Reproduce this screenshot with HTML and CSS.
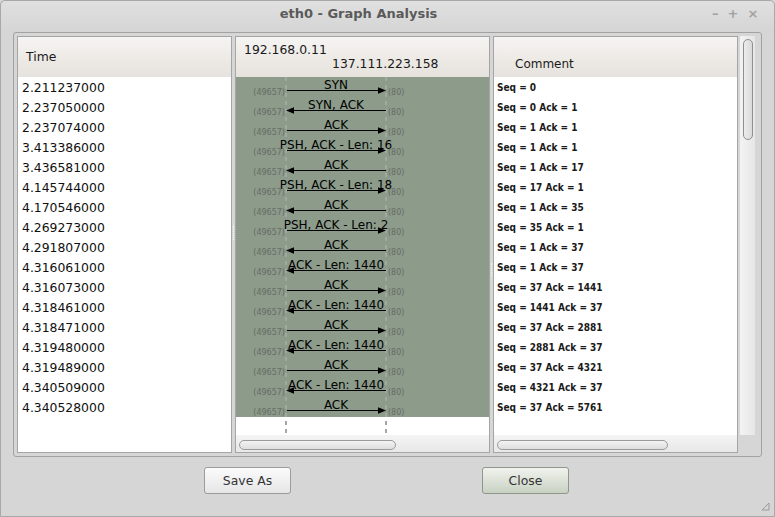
FILE: index.html
```html
<!DOCTYPE html>
<html>
<head>
<meta charset="utf-8">
<link rel="stylesheet" href="styles.css">
</head>
<body>
<div class="window">
  <div class="titlebar">
    <div class="title">eth0 - Graph Analysis</div>
    <div class="controls"><span>–</span><span>+</span><span>×</span></div>
  </div>
  <div class="frame">
    <div class="panel panel-time">
      <div class="hdr hdr-time">Time</div>
      <div class="rows time-rows">
        <div class="row">2.211237000</div>
        <div class="row">2.237050000</div>
        <div class="row">2.237074000</div>
        <div class="row">3.413386000</div>
        <div class="row">3.436581000</div>
        <div class="row">4.145744000</div>
        <div class="row">4.170546000</div>
        <div class="row">4.269273000</div>
        <div class="row">4.291807000</div>
        <div class="row">4.316061000</div>
        <div class="row">4.316073000</div>
        <div class="row">4.318461000</div>
        <div class="row">4.318471000</div>
        <div class="row">4.319480000</div>
        <div class="row">4.319489000</div>
        <div class="row">4.340509000</div>
        <div class="row">4.340528000</div>
      </div>
    </div>
    <div class="pane-gap"><span class="grip"></span></div>
    <div class="panel panel-graph">
      <div class="hdr hdr-graph">
        <div class="host1">192.168.0.11</div>
        <div class="host2">137.111.223.158</div>
      </div>
      <svg class="graph" width="253" height="358" viewBox="0 0 253 358">
        <rect x="0" y="0" width="253" height="340" fill="#8c9b8a"/>
        <line x1="50" y1="0" x2="50" y2="358" class="dash"/>
        <line x1="150" y1="0" x2="150" y2="358" class="dash"/>
        <g class="flow" transform="translate(0,0)">
          <text x="100" y="11.5" class="lbl">SYN</text>
          <line x1="51" y1="13.5" x2="146" y2="13.5"/><polygon points="142,10.3 150,13.5 142,16.7"/>
          <text x="49" y="18" class="port pl">(49657)</text><text x="152" y="18" class="port">(80)</text>
        </g>
        <g class="flow" transform="translate(0,20)">
          <text x="100" y="11.5" class="lbl">SYN, ACK</text>
          <line x1="54" y1="13.5" x2="150" y2="13.5"/><polygon points="58,10.3 50,13.5 58,16.7"/>
          <text x="49" y="18" class="port pl">(49657)</text><text x="152" y="18" class="port">(80)</text>
        </g>
        <g class="flow" transform="translate(0,40)">
          <text x="100" y="11.5" class="lbl">ACK</text>
          <line x1="51" y1="13.5" x2="146" y2="13.5"/><polygon points="142,10.3 150,13.5 142,16.7"/>
          <text x="49" y="18" class="port pl">(49657)</text><text x="152" y="18" class="port">(80)</text>
        </g>
        <g class="flow" transform="translate(0,60)">
          <text x="100" y="11.5" class="lbl">PSH, ACK - Len: 16</text>
          <line x1="51" y1="13.5" x2="146" y2="13.5"/><polygon points="142,10.3 150,13.5 142,16.7"/>
          <text x="49" y="18" class="port pl">(49657)</text><text x="152" y="18" class="port">(80)</text>
        </g>
        <g class="flow" transform="translate(0,80)">
          <text x="100" y="11.5" class="lbl">ACK</text>
          <line x1="54" y1="13.5" x2="150" y2="13.5"/><polygon points="58,10.3 50,13.5 58,16.7"/>
          <text x="49" y="18" class="port pl">(49657)</text><text x="152" y="18" class="port">(80)</text>
        </g>
        <g class="flow" transform="translate(0,100)">
          <text x="100" y="11.5" class="lbl">PSH, ACK - Len: 18</text>
          <line x1="51" y1="13.5" x2="146" y2="13.5"/><polygon points="142,10.3 150,13.5 142,16.7"/>
          <text x="49" y="18" class="port pl">(49657)</text><text x="152" y="18" class="port">(80)</text>
        </g>
        <g class="flow" transform="translate(0,120)">
          <text x="100" y="11.5" class="lbl">ACK</text>
          <line x1="54" y1="13.5" x2="150" y2="13.5"/><polygon points="58,10.3 50,13.5 58,16.7"/>
          <text x="49" y="18" class="port pl">(49657)</text><text x="152" y="18" class="port">(80)</text>
        </g>
        <g class="flow" transform="translate(0,140)">
          <text x="100" y="11.5" class="lbl">PSH, ACK - Len: 2</text>
          <line x1="51" y1="13.5" x2="146" y2="13.5"/><polygon points="142,10.3 150,13.5 142,16.7"/>
          <text x="49" y="18" class="port pl">(49657)</text><text x="152" y="18" class="port">(80)</text>
        </g>
        <g class="flow" transform="translate(0,160)">
          <text x="100" y="11.5" class="lbl">ACK</text>
          <line x1="54" y1="13.5" x2="150" y2="13.5"/><polygon points="58,10.3 50,13.5 58,16.7"/>
          <text x="49" y="18" class="port pl">(49657)</text><text x="152" y="18" class="port">(80)</text>
        </g>
        <g class="flow" transform="translate(0,180)">
          <text x="100" y="11.5" class="lbl">ACK - Len: 1440</text>
          <line x1="54" y1="13.5" x2="150" y2="13.5"/><polygon points="58,10.3 50,13.5 58,16.7"/>
          <text x="49" y="18" class="port pl">(49657)</text><text x="152" y="18" class="port">(80)</text>
        </g>
        <g class="flow" transform="translate(0,200)">
          <text x="100" y="11.5" class="lbl">ACK</text>
          <line x1="51" y1="13.5" x2="146" y2="13.5"/><polygon points="142,10.3 150,13.5 142,16.7"/>
          <text x="49" y="18" class="port pl">(49657)</text><text x="152" y="18" class="port">(80)</text>
        </g>
        <g class="flow" transform="translate(0,220)">
          <text x="100" y="11.5" class="lbl">ACK - Len: 1440</text>
          <line x1="54" y1="13.5" x2="150" y2="13.5"/><polygon points="58,10.3 50,13.5 58,16.7"/>
          <text x="49" y="18" class="port pl">(49657)</text><text x="152" y="18" class="port">(80)</text>
        </g>
        <g class="flow" transform="translate(0,240)">
          <text x="100" y="11.5" class="lbl">ACK</text>
          <line x1="51" y1="13.5" x2="146" y2="13.5"/><polygon points="142,10.3 150,13.5 142,16.7"/>
          <text x="49" y="18" class="port pl">(49657)</text><text x="152" y="18" class="port">(80)</text>
        </g>
        <g class="flow" transform="translate(0,260)">
          <text x="100" y="11.5" class="lbl">ACK - Len: 1440</text>
          <line x1="54" y1="13.5" x2="150" y2="13.5"/><polygon points="58,10.3 50,13.5 58,16.7"/>
          <text x="49" y="18" class="port pl">(49657)</text><text x="152" y="18" class="port">(80)</text>
        </g>
        <g class="flow" transform="translate(0,280)">
          <text x="100" y="11.5" class="lbl">ACK</text>
          <line x1="51" y1="13.5" x2="146" y2="13.5"/><polygon points="142,10.3 150,13.5 142,16.7"/>
          <text x="49" y="18" class="port pl">(49657)</text><text x="152" y="18" class="port">(80)</text>
        </g>
        <g class="flow" transform="translate(0,300)">
          <text x="100" y="11.5" class="lbl">ACK - Len: 1440</text>
          <line x1="54" y1="13.5" x2="150" y2="13.5"/><polygon points="58,10.3 50,13.5 58,16.7"/>
          <text x="49" y="18" class="port pl">(49657)</text><text x="152" y="18" class="port">(80)</text>
        </g>
        <g class="flow" transform="translate(0,320)">
          <text x="100" y="11.5" class="lbl">ACK</text>
          <line x1="51" y1="13.5" x2="146" y2="13.5"/><polygon points="142,10.3 150,13.5 142,16.7"/>
          <text x="49" y="18" class="port pl">(49657)</text><text x="152" y="18" class="port">(80)</text>
        </g>
      </svg>
      <div class="hscroll"><div class="thumb thumb-graph"></div></div>
    </div>
    <div class="pane-gap"><span class="grip grip2"></span></div>
    <div class="panel panel-comment">
      <div class="hdr hdr-comment">Comment</div>
      <div class="rows comment-rows">
        <div class="row">Seq = 0</div>
        <div class="row">Seq = 0 Ack = 1</div>
        <div class="row">Seq = 1 Ack = 1</div>
        <div class="row">Seq = 1 Ack = 1</div>
        <div class="row">Seq = 1 Ack = 17</div>
        <div class="row">Seq = 17 Ack = 1</div>
        <div class="row">Seq = 1 Ack = 35</div>
        <div class="row">Seq = 35 Ack = 1</div>
        <div class="row">Seq = 1 Ack = 37</div>
        <div class="row">Seq = 1 Ack = 37</div>
        <div class="row">Seq = 37 Ack = 1441</div>
        <div class="row">Seq = 1441 Ack = 37</div>
        <div class="row">Seq = 37 Ack = 2881</div>
        <div class="row">Seq = 2881 Ack = 37</div>
        <div class="row">Seq = 37 Ack = 4321</div>
        <div class="row">Seq = 4321 Ack = 37</div>
        <div class="row">Seq = 37 Ack = 5761</div>
      </div>
      <div class="hscroll"><div class="thumb thumb-comment"></div></div>
    </div>
    <div class="vscroll"><div class="vthumb"></div></div>
  </div>
  <div class="buttons">
    <button class="btn">Save As</button>
    <button class="btn btn-close">Close</button>
  </div>
  <svg class="resize-grip" width="8" height="8" viewBox="0 0 8 8">
    <polygon points="7,0 7,7 0,7" fill="none" stroke="#9a9a9a" stroke-width="1"/>
  </svg>
</div>
</body>
</html>
```
FILE: styles.css
```css
* { box-sizing: border-box; }
html, body { margin: 0; padding: 0; }
body {
  width: 775px;
  height: 517px;
  overflow: hidden;
  background: #d6d6d6;
  font-family: "DejaVu Sans", "Noto Sans", sans-serif;
}
.window {
  position: relative;
  width: 775px;
  height: 517px;
  border: 1px solid #a8a8a8;
  border-radius: 5px 5px 0 0;
  background: #d6d6d6;
  display: flex;
  flex-direction: column;
  align-items: flex-start;
}
.titlebar {
  width: 100%;
  height: 27px;
  display: flex;
  align-items: center;
  background: linear-gradient(#e0e0e0, #d6d6d6);
  border-radius: 5px 5px 0 0;
}
.title {
  flex: 1;
  text-align: center;
  font-size: 13px;
  font-weight: bold;
  color: #5a5a5a;
  padding-left: 4px;
  margin-top: -3px;
}
.controls {
  display: flex;
  gap: 9px;
  width: 62px;
  margin-top: -2px;
  font-size: 13px;
  font-weight: bold;
  color: #a2a2a2;
}
.frame {
  margin: 4px 0 0 12px;
  width: 749px;
  height: 425px;
  border: 1px solid #a2a2a2;
  border-radius: 3px;
  padding: 3px;
  display: flex;
}
.panel {
  height: 417px;
  border: 1px solid #a5a5a5;
  background: #fff;
  display: flex;
  flex-direction: column;
}
.panel-time { width: 215px; }
.panel-graph { width: 255px; }
.panel-comment { width: 245px; }
.pane-gap {
  width: 3px;
  height: 417px;
  display: flex;
  align-items: center;
  justify-content: center;
}
.grip {
  width: 1px;
  height: 14px;
  margin-top: -24px;
  border-left: 1px dotted #f4f4f4;
}
.grip2 { margin-top: 50px; }
.hdr {
  height: 40px;
  flex: none;
  background: linear-gradient(#f6f4f2, #e6e2dd);
  font-size: 12.4px;
  color: #1a1a1a;
}
.hdr-time {
  display: flex;
  align-items: center;
  padding: 0 0 1px 8px;
}
.hdr-graph {
  padding: 6px 0 0 8px;
  line-height: 14px;
}
.host2 { padding-left: 88px; }
.hdr-comment {
  padding: 20px 0 0 21px;
  line-height: 14px;
  font-size: 12px;
}
.rows { flex: 1; padding-top: 1px; }
.row {
  height: 20px;
  line-height: 20px;
  white-space: nowrap;
}
.time-rows .row {
  font-size: 12.4px;
  padding-left: 4px;
  color: #111;
}
.comment-rows .row {
  font-size: 10px;
  font-weight: bold;
  font-stretch: condensed;
  font-family: "DejaVu Sans Condensed", "DejaVu Sans", sans-serif;
  padding-left: 3px;
  color: #1a1a1a;
}
.graph { display: block; flex: none; }
.graph .dash {
  stroke: #a4a8a3;
  stroke-width: 2;
  stroke-dasharray: 4 4;
}
.flow line { stroke: #000; stroke-width: 1; }
.flow polygon { fill: #000; }
.lbl {
  font-family: "DejaVu Sans", sans-serif;
  font-size: 12px;
  text-anchor: middle;
  fill: #000;
}
.port {
  font-family: "DejaVu Sans", sans-serif;
  font-size: 8px;
  fill: #666b65;
}
.pl { text-anchor: end; }
.hscroll {
  height: 17px;
  flex: none;
  background: linear-gradient(#f4f4f4, #e8e8e8);
  padding: 5px 0 0 3px;
}
.thumb {
  height: 10px;
  border: 1px solid #9b9b9b;
  border-radius: 5px;
  background: linear-gradient(#f3f3f3, #dedede);
}
.thumb-graph { width: 157px; }
.thumb-comment { width: 171px; }
.vscroll {
  margin-left: 2px;
  width: 15px;
  height: 399px;
  background: linear-gradient(to right, #f3f3f3, #e6e6e6);
  padding: 3px 0 0 3px;
}
.vthumb {
  width: 10px;
  height: 101px;
  border: 1px solid #8f8f8f;
  border-radius: 5px;
  background: linear-gradient(to right, #ececec, #dadada);
}
.buttons {
  display: flex;
  gap: 191px;
  margin: 10px 0 0 203px;
}
.btn {
  width: 87px;
  height: 27px;
  border: 1px solid #9c9c9c;
  border-radius: 3px;
  background: linear-gradient(#fbfbfb, #e6e6e6);
  font-family: "DejaVu Sans", sans-serif;
  font-size: 12.4px;
  color: #333;
  padding: 0;
}
.btn-close {
  background: linear-gradient(#f1f3ee, #c8d1c2);
  border-color: #8f968b;
}
.resize-grip {
  position: absolute;
  right: 4px;
  bottom: 5px;
}
```
